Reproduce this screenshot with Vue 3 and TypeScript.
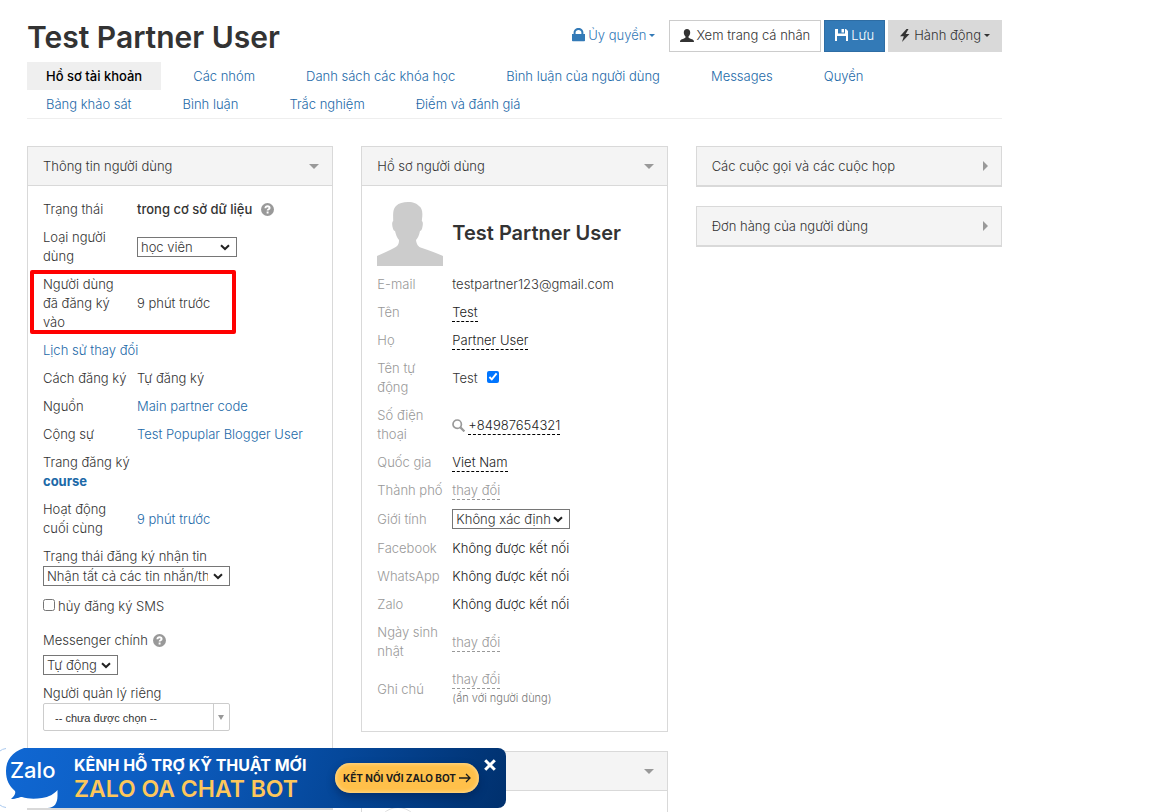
<script setup lang="ts">
import { ref } from 'vue'

interface Tab {
  label: string
  active?: boolean
}

interface ContactRow {
  label: string
  value: string
}

const tabs: Tab[] = [
  { label: 'Hồ sơ tài khoản', active: true },
  { label: 'Các nhóm' },
  { label: 'Danh sách các khóa học' },
  { label: 'Bình luận của người dùng' },
  { label: 'Messages' },
  { label: 'Quyền' },
  { label: 'Bảng khảo sát' },
  { label: 'Bình luận' },
  { label: 'Trắc nghiệm' },
  { label: 'Điểm và đánh giá' },
]

const channels: ContactRow[] = [
  { label: 'Facebook', value: 'Không được kết nối' },
  { label: 'WhatsApp', value: 'Không được kết nối' },
  { label: 'Zalo', value: 'Không được kết nối' },
]

const collapsed: string[] = ['Các cuộc gọi và các cuộc họp', 'Đơn hàng của người dùng']

const autoName = ref(true)
const smsOff = ref(false)
const bannerOpen = ref(true)
</script>

<template>
  <div class="page">
    <header class="top">
      <h1>Test Partner User</h1>
      <div class="actions">
        <button type="button" class="btn btn-link">
          <svg class="icon" width="13" height="14" viewBox="0 0 13 14" aria-hidden="true">
            <path fill="currentColor" d="M0 6h1.600V4.500C1.600 1.800 3.800 0 6.500 0s4.900 1.800 4.900 4.500V6H13v6.500a.8.8 0 0 1-.8.8H.8a.8.8 0 0 1-.8-.8zM3.600 6h5.800V4.500C9.400 3 8.200 2 6.500 2S3.600 3 3.600 4.500z" />
          </svg>
          <span>Ủy quyền</span><i class="caret"></i>
        </button>
        <button type="button" class="btn btn-default">
          <svg class="icon" width="14" height="13" viewBox="0 0 14 13" aria-hidden="true">
            <path fill="currentColor" d="M7 0c2 0 3.200 1.400 3.200 3.400 0 1.600-.7 3.100-1.700 4v1c.6.900 2.200 1.200 3.700 1.900 1.100.5 1.800 1.100 1.800 2.700H0c0-1.600.7-2.200 1.800-2.700 1.500-.7 3.100-1 3.700-1.900v-1c-1-.9-1.700-2.400-1.700-4C3.800 1.400 5 0 7 0z" />
          </svg>
          <span>Xem trang cá nhân</span>
        </button>
        <button type="button" class="btn btn-primary">
          <svg class="icon" width="13" height="12" viewBox="0 0 13 12" aria-hidden="true">
            <path fill="currentColor" fill-rule="evenodd" d="M0 0h3v4.500h7V0h1l2 2v10h-2V7H2v5H0zM6.500 0H9v3.500H6.500z" />
          </svg>
          <span>Lưu</span>
        </button>
        <button type="button" class="btn btn-grey">
          <svg class="icon" width="10" height="13" viewBox="0 0 10 13" aria-hidden="true">
            <path fill="currentColor" d="M6.500 0 0 7.200h3.800L2 13l7.500-8H5.700L8.500 0z" />
          </svg>
          <span>Hành động</span><i class="caret"></i>
        </button>
      </div>
    </header>

    <nav class="tabs">
      <a v-for="tab in tabs" :key="tab.label" href="#" class="tab" :class="{ active: tab.active }">{{ tab.label }}</a>
    </nav>

    <main class="columns">
      <div class="column">
        <section class="card">
          <h2 class="card-head"><span>Thông tin người dùng</span><i class="arrow down"></i></h2>
          <div class="card-body">
            <table class="info">
              <tbody>
                <tr>
                  <th scope="row">Trạng thái</th>
                  <td>
                    <b class="status">trong cơ sở dữ liệu</b>
                    <svg class="help" width="13" height="13" viewBox="0 0 13 13" aria-hidden="true">
                      <circle cx="6.500" cy="6.500" r="6.500" fill="#999" />
                      <path d="M4.400 5.200c0-1.300.9-2 2.100-2s2.100.7 2.100 1.700c0 1.400-2 1.300-2 2.700M6.600 8.600v1.800" fill="none" stroke="#fff" stroke-width="1.900" />
                    </svg>
                  </td>
                </tr>
                <tr>
                  <th scope="row"><label for="user-type">Loại người dùng</label></th>
                  <td>
                    <select id="user-type" class="w-type"><option>học viên</option></select>
                  </td>
                </tr>
                <tr>
                  <th scope="row" class="marked">Người dùng đã đăng ký vào</th>
                  <td>9 phút trước</td>
                </tr>
                <tr>
                  <td colspan="2"><a href="#">Lịch sử thay đổi</a></td>
                </tr>
                <tr>
                  <th scope="row">Cách đăng ký</th>
                  <td>Tự đăng ký</td>
                </tr>
                <tr>
                  <th scope="row">Nguồn</th>
                  <td><a href="#">Main partner code</a></td>
                </tr>
                <tr>
                  <th scope="row">Cộng sự</th>
                  <td><a href="#">Test Popuplar Blogger User</a></td>
                </tr>
                <tr>
                  <td colspan="2">Trang đăng ký<br /><a href="#" class="strong">course</a></td>
                </tr>
                <tr>
                  <th scope="row">Hoạt động cuối cùng</th>
                  <td><a href="#">9 phút trước</a></td>
                </tr>
              </tbody>
            </table>
            <div class="form">
              <label for="newsletter">Trạng thái đăng ký nhận tin</label>
              <select id="newsletter" class="w-news"><option>Nhận tất cả các tin nhắn/thư</option></select>
              <div class="sms">
                <input id="sms" v-model="smsOff" type="checkbox" />
                <label for="sms">hủy đăng ký SMS</label>
              </div>
              <div class="messenger">
                <label for="messenger">Messenger chính</label>
                <svg class="help" width="13" height="13" viewBox="0 0 13 13" aria-hidden="true">
                  <circle cx="6.500" cy="6.500" r="6.500" fill="#999" />
                  <path d="M4.400 5.200c0-1.300.9-2 2.100-2s2.100.7 2.100 1.700c0 1.400-2 1.300-2 2.700M6.600 8.600v1.800" fill="none" stroke="#fff" stroke-width="1.900" />
                </svg>
              </div>
              <select id="messenger" class="w-auto"><option>Tự động</option></select>
              <label for="manager" class="manager-label">Người quản lý riêng</label>
              <div class="manager">
                <select id="manager"><option>-- chưa được chọn --</option></select>
              </div>
            </div>
          </div>
        </section>
        <section class="card"><div class="card-head"></div></section>
      </div>

      <div class="column">
        <section class="card">
          <h2 class="card-head"><span>Hồ sơ người dùng</span><i class="arrow down"></i></h2>
          <div class="card-body">
            <div class="person">
              <svg width="66" height="66" viewBox="0 0 66 66" aria-hidden="true">
                <path fill="#cccccc" d="M31 2c6 0 9 2 11 4 3 2 4 6 3 13l-.2 2c1.500 1 1.200 4 .4 7-.5 2-1.200 3-2.200 3-.8 4-2 7-4 9 .5 4 2 7 6 8 8 3 15 5 21 8v10H0V56c6-3 12-5 17-8 4-2 5-4 5-8-2-2-3-5-4-9-1 0-1.700-1-2.200-3-.8-3-1-6 .4-7C16 13 16 9 19 6c3-3 7-4 12-4z" />
              </svg>
              <h3>Test Partner User</h3>
            </div>
            <table class="info muted">
              <tbody>
                <tr>
                  <th scope="row">E-mail</th>
                  <td>testpartner123@gmail.com</td>
                </tr>
                <tr>
                  <th scope="row">Tên</th>
                  <td><a href="#" class="edit">Test</a></td>
                </tr>
                <tr>
                  <th scope="row">Họ</th>
                  <td><a href="#" class="edit">Partner User</a></td>
                </tr>
                <tr>
                  <th scope="row"><label for="auto-name">Tên tự động</label></th>
                  <td>
                    <span class="auto">Test <input id="auto-name" v-model="autoName" type="checkbox" /></span>
                  </td>
                </tr>
                <tr>
                  <th scope="row">Số điện thoại</th>
                  <td>
                    <span class="phone">
                      <svg width="13" height="13" viewBox="0 0 13 13" aria-hidden="true">
                        <circle cx="5.200" cy="5.200" r="4.200" fill="none" stroke="#999" stroke-width="1.700" />
                        <path d="m8.400 8.400 4 4" stroke="#999" stroke-width="2.200" />
                      </svg>
                      <a href="#" class="edit">+84987654321</a>
                    </span>
                  </td>
                </tr>
                <tr>
                  <th scope="row">Quốc gia</th>
                  <td><a href="#" class="edit">Viet Nam</a></td>
                </tr>
                <tr>
                  <th scope="row">Thành phố</th>
                  <td><a href="#" class="edit empty">thay đổi</a></td>
                </tr>
                <tr class="tall">
                  <th scope="row"><label for="gender">Giới tính</label></th>
                  <td>
                    <select id="gender" class="w-gender"><option>Không xác định</option></select>
                  </td>
                </tr>
                <tr v-for="row in channels" :key="row.label">
                  <th scope="row">{{ row.label }}</th>
                  <td class="dark">{{ row.value }}</td>
                </tr>
                <tr>
                  <th scope="row">Ngày sinh nhật</th>
                  <td><a href="#" class="edit empty">thay đổi</a></td>
                </tr>
                <tr>
                  <th scope="row">Ghi chú</th>
                  <td><a href="#" class="edit empty">thay đổi</a><small>(ẩn với người dùng)</small></td>
                </tr>
              </tbody>
            </table>
          </div>
        </section>
        <section class="card">
          <div class="card-head"><span></span><i class="arrow down"></i></div>
          <div class="card-body"><div class="ring"></div></div>
        </section>
      </div>

      <div class="column">
        <section v-for="title in collapsed" :key="title" class="card closed">
          <h2 class="card-head"><span>{{ title }}</span><i class="arrow right"></i></h2>
        </section>
      </div>
    </main>

    <aside v-if="bannerOpen" class="banner">
      <div class="logo">
        <svg width="60" height="60" viewBox="0 0 60 60" aria-hidden="true">
          <path fill="#fff" d="M24 0C12 4 6 12 6 23c0 9 3 15 9 20 1 3-1 5-4 8 6 0 8-2 11-2 6 2 13 2 20 1 7-1 12-4 15.500-8v6c0 7-3 12-10 12H0V0z" />
          <path fill="none" stroke="#a9c8ee" stroke-width="1" d="M0 3Q2 1 6 .5M0 57q2 2 6 2.500" />
        </svg>
        <span>Zalo</span>
      </div>
      <div class="pitch">
        <strong>KÊNH HỖ TRỢ KỸ THUẬT MỚI</strong>
        <em>ZALO OA CHAT BOT</em>
      </div>
      <a href="#" class="connect">
        <span>KẾT NỐI VỚI ZALO BOT</span>
        <svg width="12" height="10" viewBox="0 0 12 10" aria-hidden="true">
          <path d="M0 5h11M7 1l4 4-4 4" fill="none" stroke="#1c1c1c" stroke-width="1.300" />
        </svg>
      </a>
      <button type="button" class="close" aria-label="Đóng" @click="bannerOpen = false">
        <svg width="12" height="12" viewBox="0 0 12 12" aria-hidden="true">
          <path d="m1.200 1.200 9.600 9.600m0-9.600-9.600 9.600" stroke="#fff" stroke-width="3" />
        </svg>
      </button>
    </aside>
  </div>
</template>

<style>
body {
  margin: 0;
  background: #fff;
}
</style>

<style scoped>
.page {
  box-sizing: border-box;
  height: 100vh;
  overflow: hidden;
  padding: 20px 165px 0 27px;
  font-family: Inter, "Noto Sans", sans-serif;
  font-size: 13px;
  font-weight: 300;
  line-height: 19px;
  color: #333;
}
a {
  color: #1c69a8;
  text-decoration: none;
}
h1,
h2,
h3 {
  margin: 0;
}
.top {
  display: flex;
  justify-content: space-between;
  height: 42px;
}
h1 {
  font-size: 30px;
  font-weight: 600;
  line-height: 34px;
}
.actions {
  display: flex;
  gap: 3px;
}
.btn {
  display: flex;
  align-items: center;
  justify-content: center;
  gap: 2px;
  box-sizing: border-box;
  height: 32px;
  padding: 0 10px 2px;
  border: 1px solid transparent;
  background: none;
  color: #333;
  font: inherit;
  white-space: nowrap;
}
.btn-link {
  gap: 3px;
  color: #337ab7;
}
.btn-default {
  background: #fff;
  border-color: #ccc;
}
.btn-primary {
  gap: 3px;
  background: #337ab7;
  border-color: #2e6da4;
  color: #fff;
}
.btn-grey {
  gap: 3px;
  padding: 0 11px 2px;
  background: #d9d9d9;
}
.btn .icon {
  flex: none;
}
.btn-grey .icon {
  margin-right: 1px;
}
.caret {
  border: 3px solid transparent;
  border-top-color: currentColor;
  border-bottom: 0;
}
.tabs {
  display: flex;
  flex-wrap: wrap;
  column-gap: 13px;
  border-bottom: 1px solid #eee;
}
.tab {
  padding: 0 19px;
  line-height: 28px;
}
.tab.active {
  background: #efefef;
  color: #000;
  font-weight: 500;
}
.columns {
  display: grid;
  grid-template-columns: repeat(3, minmax(0, 1fr));
  gap: 28px;
  align-items: start;
  padding-top: 27px;
}
.column {
  display: grid;
  gap: 19px;
}
.card {
  border: 1px solid #d9d9d9;
  background: #fff;
}
.card-head {
  display: flex;
  align-items: center;
  justify-content: space-between;
  box-sizing: border-box;
  height: 39px;
  padding: 0 13px 0 15px;
  border-bottom: 1px solid #d9d9d9;
  background: #f4f4f4;
  font-size: 13px;
  font-weight: 300;
}
.closed {
  border-bottom-width: 2px;
}
.closed .card-head {
  height: 38px;
  border-bottom: 0;
}
.arrow {
  border: 5px solid transparent;
}
.arrow.down {
  border-top-color: #999;
  border-bottom: 0;
}
.arrow.right {
  border-left-color: #999;
  border-right: 0;
}
.card-body {
  padding: 10px 15px 18px;
}
.info {
  width: 100%;
  border-collapse: collapse;
}
.info th,
.info td {
  padding: 4px 0 5px;
  text-align: left;
  vertical-align: middle;
  font-weight: 300;
}
.info th {
  width: 84px;
  padding-right: 10px;
}
.info.muted th {
  width: 68px;
  padding-right: 7px;
  color: #999;
}
.info .strong {
  font-weight: 700;
}
.status {
  font-weight: 500;
}
.help {
  margin-left: 5px;
  vertical-align: -2px;
}
.marked {
  position: relative;
}
.marked::after {
  content: "";
  position: absolute;
  left: -13px;
  top: -1px;
  bottom: 3px;
  width: 198px;
  border: 4px solid #f00;
  border-radius: 2px;
}
select {
  display: block;
  appearance: none;
  box-sizing: border-box;
  height: 20px;
  padding: 0 19px 0 3px;
  border: 1px solid #767676;
  border-radius: 0;
  background: #fff url("data:image/svg+xml,%3Csvg xmlns='http://www.w3.org/2000/svg' width='10' height='7' viewBox='0 0 10 7'%3E%3Cpath d='M1 1.200l4 3.800 4-3.800' fill='none' stroke='%23222' stroke-width='2'/%3E%3C/svg%3E") no-repeat right 6px center;
  color: #333;
  font: inherit;
}
.w-type {
  width: 100px;
}
.w-news {
  width: 187px;
  padding-right: 21px;
}
.w-auto {
  width: 75px;
}
.w-gender {
  width: 118px;
  padding-right: 16px;
}
input[type="checkbox"] {
  width: 12px;
  height: 12px;
  margin: 0 0 3px;
}
.form {
  padding-top: 4px;
}
.form > label {
  display: block;
}
.sms {
  display: flex;
  align-items: center;
  gap: 3px;
  margin-top: 11px;
}
.messenger {
  display: flex;
  align-items: center;
  margin: 15px 0 5px;
}
.info .help {
  margin-left: 9px;
}
.form > .manager-label {
  margin-top: 9px;
}
.manager {
  position: relative;
  box-sizing: border-box;
  width: 187px;
  height: 28px;
  border: 1px solid #ccc;
  border-radius: 2px;
}
.manager select {
  width: 170px;
  height: 26px;
  padding: 2px 0 0 11px;
  border: 0;
  border-right: 1px solid #ccc;
  background: none;
  font-family: "Liberation Sans", Arial, sans-serif;
  font-size: 11px;
  font-weight: 400;
}
.manager::after {
  content: "";
  position: absolute;
  right: 5px;
  top: 11px;
  border: 3px solid transparent;
  border-top: 5px solid #999;
  border-bottom: 0;
}
.person {
  display: flex;
  align-items: center;
  gap: 9px;
  padding: 4px 0 5px;
}
h3 {
  font-size: 20px;
  font-weight: 600;
  line-height: 28px;
}
.edit {
  display: inline-block;
  line-height: 18px;
  border-bottom: 1px dashed #000;
  color: #222;
}
.edit.empty {
  border-color: #999;
  color: #999;
}
.dark {
  color: #222;
}
.info .tall td {
  padding: 4px 0 6px;
}
.auto,
.phone {
  display: flex;
  align-items: center;
}
.auto {
  gap: 9px;
}
.phone {
  gap: 3px;
}
small {
  display: block;
  color: #777;
  font-size: 11px;
}
.ring {
  width: 40px;
  height: 40px;
  margin-top: 6px;
  border: 1px solid #ddd;
  border-radius: 50%;
}
.banner {
  position: fixed;
  left: 0;
  bottom: 4px;
  display: flex;
  align-items: center;
  box-sizing: border-box;
  width: 506px;
  height: 60px;
  border-radius: 0 8px 8px 0;
  background: linear-gradient(110deg, #1068d4 0%, #0c5bbd 35%, #05489b 65%, #00306d 100%);
}
.logo {
  position: relative;
  flex: none;
  width: 74px;
  height: 60px;
}
.logo span {
  position: absolute;
  left: 10px;
  top: 8px;
  color: #fff;
  font-size: 22px;
  font-weight: 500;
  line-height: 28px;
}
.pitch {
  flex: 1;
  white-space: nowrap;
}
.pitch strong,
.pitch em {
  display: block;
  font-style: normal;
}
.pitch strong {
  color: #fff;
  font-size: 16px;
  font-weight: 700;
  line-height: 22px;
}
.pitch em {
  color: #fdc75b;
  font-size: 23px;
  font-weight: 600;
  line-height: 26px;
}
.connect {
  display: flex;
  flex: none;
  align-items: center;
  justify-content: center;
  gap: 3px;
  width: 144px;
  height: 30px;
  border-radius: 15px;
  background: #ffc04a;
  box-shadow: inset 0 0 4px #ffe3ac, 0 4px 8px rgba(0, 20, 60, 0.4);
  color: #1c1c1c;
  font-size: 10px;
  font-weight: 700;
  white-space: nowrap;
}
.close {
  display: flex;
  align-self: flex-start;
  margin: 11px 10px 0 5px;
  padding: 0;
  border: 0;
  background: none;
}
</style>
